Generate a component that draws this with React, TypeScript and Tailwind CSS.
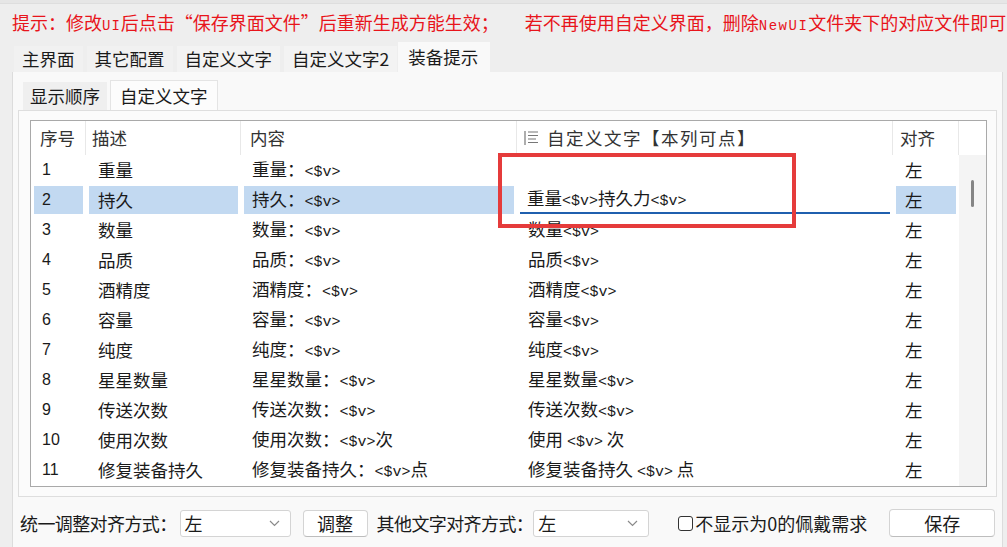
import React from 'react';

type Row = { no: number; name: string; content: string; custom: string };

const rows: Row[] = [
  { no: 1, name: '重量', content: '重量：<$v>', custom: '' },
  { no: 2, name: '持久', content: '持久：<$v>', custom: '重量<$v>持久力<$v>' },
  { no: 3, name: '数量', content: '数量：<$v>', custom: '数量<$v>' },
  { no: 4, name: '品质', content: '品质：<$v>', custom: '品质<$v>' },
  { no: 5, name: '酒精度', content: '酒精度：<$v>', custom: '酒精度<$v>' },
  { no: 6, name: '容量', content: '容量：<$v>', custom: '容量<$v>' },
  { no: 7, name: '纯度', content: '纯度：<$v>', custom: '纯度<$v>' },
  { no: 8, name: '星星数量', content: '星星数量：<$v>', custom: '星星数量<$v>' },
  { no: 9, name: '传送次数', content: '传送次数：<$v>', custom: '传送次数<$v>' },
  { no: 10, name: '使用次数', content: '使用次数：<$v>次', custom: '使用 <$v> 次' },
  { no: 11, name: '修复装备持久', content: '修复装备持久：<$v>点', custom: '修复装备持久 <$v> 点' },
];

const SELECTED = 1;

// <$v> 占位符用等宽小字显示
const Val: React.FC<{ text: string }> = ({ text }) => {
  const parts = text.split('<$v>');
  return (
    <span className="whitespace-pre">
      {parts.map((p, i) => (
        <React.Fragment key={i}>
          {p}
          {i < parts.length - 1 && (
            <span className="font-['Liberation_Mono',monospace] text-[15px]">&lt;$v&gt;</span>
          )}
        </React.Fragment>
      ))}
    </span>
  );
};

const Chevron = () => (
  <svg width="11" height="7" viewBox="0 0 11 7" fill="none">
    <path d="M1 1l4.5 4.5L10 1" stroke="#8a8a8a" strokeWidth="1.2" />
  </svg>
);

const AlignIcon = () => (
  <svg width="15" height="16" viewBox="0 0 15 16" fill="none" stroke="#777" strokeWidth="1.2">
    <path d="M1 1v14" />
    <path d="M4 2h10M4 5.5h10M4 9h8M4 12.5h10" />
  </svg>
);

const Select: React.FC<{ value: string; width: string }> = ({ value, width }) => (
  <div
    className={`${width} h-[27px] flex items-center justify-between pl-[4px] pr-[10px] bg-white border border-[#d4d4d4] rounded-[3px]`}
  >
    <span>{value}</span>
    <Chevron />
  </div>
);

const App: React.FC = () => {
  return (
    <div className="w-[1007px] h-[547px] overflow-hidden bg-[#eeeeee] text-[17.5px] text-[#1a1a1a] font-['Noto_Sans_CJK_SC','Liberation_Sans',sans-serif] leading-none">
      {/* 上方残留的面板边 */}
      <div className="h-[4px] bg-[#e6e6e6] border-b border-[#dedede]" />

      {/* 红色提示 */}
      <div className="h-[38px] flex items-center pl-[12px] text-[18px] text-[#e8141b] whitespace-nowrap">
        <span>
          提示：修改<span className="font-['Liberation_Mono',monospace] text-[14px] tracking-[1px]">UI</span>
          后点击“保存界面文件”后重新生成方能生效；
        </span>
        <span className="ml-[26px]">
          若不再使用自定义界面，删除
          <span className="font-['Liberation_Mono',monospace] text-[14px] tracking-[1.5px]">NewUI</span>
          文件夹下的对应文件即可
        </span>
      </div>

      {/* 主标签页 */}
      <div className="h-[30px] flex items-end pl-[14px] gap-[4px]">
        <div className="h-[26px] px-[8px] flex items-center bg-[#f1f1f1]">主界面</div>
        <div className="h-[26px] px-[8px] flex items-center bg-[#f1f1f1]">其它配置</div>
        <div className="h-[26px] px-[8px] flex items-center bg-[#f3f3f3]">自定义文字</div>
        <div className="h-[26px] px-[8px] flex items-center bg-[#f3f3f3]">自定义文字2</div>
        <div className="-ml-[3px] h-[30px] pl-[10px] pr-[12px] flex items-center bg-[#f9f9f9]">装备提示</div>
      </div>

      {/* 标签内容 */}
      <div className="ml-[12px] w-[991px] h-[475px] bg-[#f9f9f9] border-l border-r border-[#dcdcdc]">
        {/* 子标签 */}
        <div className="h-[38px] flex items-end pl-[10px] gap-[3px]">
          <div className="h-[28px] px-[7px] flex items-center bg-[#efefef]">显示顺序</div>
          <div className="h-[30px] px-[9px] flex items-center bg-[#fcfcfc] border-t border-l border-r border-[#e4e4e4]">
            自定义文字
          </div>
        </div>

        <div className="ml-[5px] w-[979px] h-[387px] bg-[#fbfbfb] border border-[#dedede]">
          <div className="relative ml-[11px] mt-[9px] w-[957px] h-[367px] bg-white border border-[#a9a9a9]">
            {/* 表头 */}
            <div className="flex h-[34px] text-[#333] bg-white">
              <div className="w-[55px] pl-[9px] flex items-center border-r border-[#e8e8e8]">序号</div>
              <div className="w-[155px] pl-[6px] flex items-center border-r border-[#e8e8e8]">描述</div>
              <div className="w-[276px] pl-[9px] flex items-center border-r border-[#e8e8e8]">内容</div>
              <div className="w-[376px] pl-[7px] flex items-center gap-[8px] border-r border-[#e8e8e8]">
                <AlignIcon />
                <span className="tracking-[1.5px]">自定义文字【本列可点】</span>
              </div>
              <div className="w-[66px] pl-[7px] flex items-center border-r border-[#e8e8e8]">对齐</div>
              <div className="flex-1" />
            </div>

            <div className="flex">
              <div className="w-[928px]">
                {rows.map((r, i) => {
                  const sel = i === SELECTED;
                  const bg = sel ? 'bg-[#c2d9f1]' : '';
                  return (
                    <div key={r.no} className="flex h-[30px]">
                      <div className="w-[55px] px-[3px] py-[1px]">
                        <div className={`h-full flex items-center pl-[8px] font-['Liberation_Sans',sans-serif] text-[16px] ${bg}`}>
                          {r.no}
                        </div>
                      </div>
                      <div className="w-[155px] px-[3px] py-[1px]">
                        <div className={`h-full flex items-center pl-[9px] ${bg}`}>{r.name}</div>
                      </div>
                      <div className="w-[276px] px-[3px] py-[1px]">
                        <div className={`h-full flex items-center pl-[8px] ${bg}`}>
                          <Val text={r.content} />
                        </div>
                      </div>
                      <div className="w-[376px] px-[3px] py-[1px]">
                        {sel ? (
                          <div className="h-full flex items-center pl-[7px] bg-white border-b-2 border-[#1f5fae]">
                            <Val text={r.custom} />
                          </div>
                        ) : (
                          <div className="h-full flex items-center pl-[8px]">
                            <Val text={r.custom} />
                          </div>
                        )}
                      </div>
                      <div className="w-[66px] px-[3px] py-[1px]">
                        <div className={`h-full flex items-center pl-[9px] ${bg}`}>左</div>
                      </div>
                    </div>
                  );
                })}
              </div>
              {/* 滚动条 */}
              <div className="flex-1 h-[331px] bg-[#f4f4f4] pt-[25px] flex justify-center">
                <div className="w-[3px] h-[27px] rounded-full bg-[#858585]" />
              </div>
            </div>

            {/* 红框标注 */}
            <div className="absolute left-[467px] top-[32px] w-[298px] h-[75px] border-[4px] border-[#e53b3b]" />
          </div>
        </div>

        {/* 底部操作栏 */}
        <div className="flex items-center pl-[7px] pt-[12px] text-[18px] whitespace-nowrap">
          <div className="tracking-[-0.6px]">统一调整对齐方式：</div>
          <div className="ml-[3px]">
            <Select value="左" width="w-[111px]" />
          </div>
          <div className="ml-[12px] w-[65px] h-[27px] flex items-center justify-center bg-white border border-[#d4d4d4] border-b-[#bdbdbd] rounded-[4px]">
            调整
          </div>
          <div className="ml-[9px] tracking-[-0.6px]">其他文字对齐方式：</div>
          <Select value="左" width="w-[116px]" />
          <div className="ml-[29px] w-[15px] h-[15px] border border-[#333] rounded-[3px] bg-white" />
          <div className="ml-[2px] w-[194px]">不显示为0的佩戴需求</div>
          <div className="w-[106px] h-[28px] flex items-center justify-center bg-white border border-[#d4d4d4] border-b-[#bdbdbd] rounded-[4px]">
            保存
          </div>
        </div>
      </div>
    </div>
  );
};

export default App;
